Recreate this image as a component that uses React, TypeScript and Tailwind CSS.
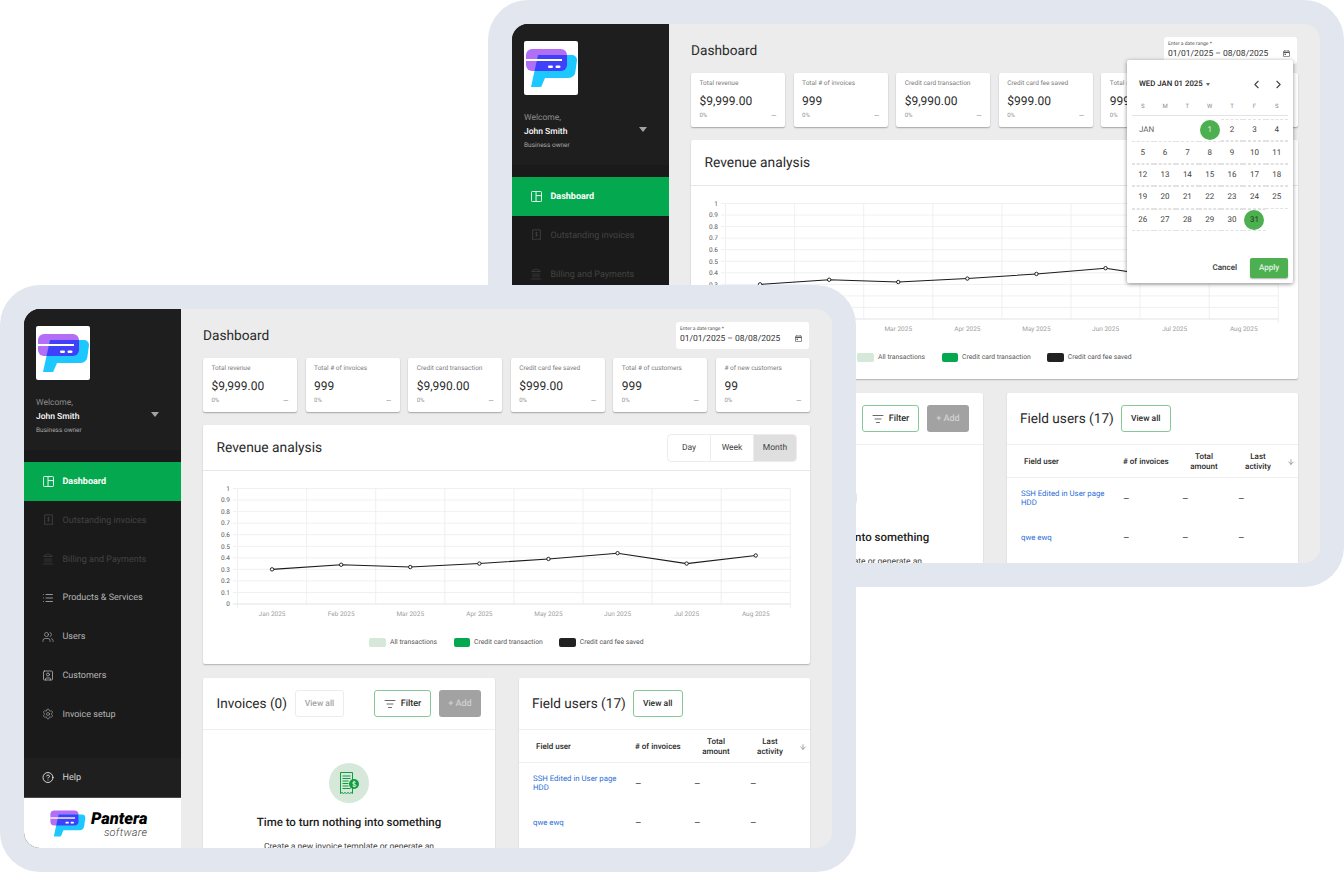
import { ArrowDown, ChevronLeft, ChevronRight, CircleHelp, Landmark, List, ListFilter, Settings, SquareUser, Users } from "lucide-react";

const STATS = [
  { label: "Total revenue", value: "$9,999.00" },
  { label: "Total # of invoices", value: "999" },
  { label: "Credit card transaction", value: "$9,990.00" },
  { label: "Credit card fee saved", value: "$999.00" },
  { label: "Total # of customers", value: "999" },
  { label: "# of new customers", value: "99" },
];

const MONTHS = ["Jan 2025", "Feb 2025", "Mar 2025", "Apr 2025", "May 2025", "Jun 2025", "Jul 2025", "Aug 2025"];
const VALUES = [0.3, 0.34, 0.32, 0.35, 0.39, 0.44, 0.35, 0.42];
const TICKS = [0, 0.1, 0.2, 0.3, 0.4, 0.5, 0.6, 0.7, 0.8, 0.9, 1];

const WEEKS = [
  [5, 6, 7, 8, 9, 10, 11],
  [12, 13, 14, 15, 16, 17, 18],
  [19, 20, 21, 22, 23, 24, 25],
  [26, 27, 28, 29, 30, 31],
];

function PLogo({ className }: { className?: string }) {
  return (
    <svg viewBox="0 0 54 54" className={className}>
      <path d="M8 8h29a6 6 0 0 1 6 6v10a6 6 0 0 1-6 6H8a6 6 0 0 1-6-6v-10a6 6 0 0 1 6-6z" fill="#b36ef7" />
      <path d="M14 14h34a5 5 0 0 1 5 5l-1.5 11a7 7 0 0 1-7 7H21L18 44a2 2 0 0 1-2 2H7L14 14z" fill="#1cc8ff" />
      <path d="M14 14h29v10a6 6 0 0 1-6 6H10.500L14 14z" fill="#4040fb" />
      <rect x="2" y="18" width="36" height="2" fill="#fff" />
      <rect x="24" y="24.500" width="5" height="2.600" rx="1.300" fill="#fff" />
      <rect x="31.500" y="24.500" width="5" height="2.600" rx="1.300" fill="#fff" />
    </svg>
  );
}

function DashboardIcon() {
  return (
    <svg viewBox="0 0 12 12" className="w-[11px] h-[11px]" fill="none" stroke="#fff" strokeWidth="1">
      <rect x="0.5" y="0.5" width="11" height="11" rx="1" />
      <path d="M5.5 0.5v11M5.5 5h6" />
    </svg>
  );
}

function ReceiptIcon() {
  return (
    <svg viewBox="0 0 12 14" className="w-[11px] h-[12px]" fill="none" stroke="currentColor" strokeWidth="1">
      <path d="M1.5 1h9v11.5l-1.5-1-1.5 1-1.5-1-1.5 1-1.5-1-1.5 1V1z" />
      <path d="M7.4 4.4C7 3.9 5 3.7 4.8 4.9c-.2 1.4 2.6.9 2.4 2.4-.2 1.1-2.1 1-2.7.4M6 3.2v5.6" strokeWidth="0.8" />
    </svg>
  );
}

function NavRow({ icon, label, tone }: { icon: React.ReactNode; label: string; tone: "active" | "muted" | "normal" }) {
  const rowClass =
    tone === "active"
      ? "bg-[#04a94f] text-white font-bold"
      : tone === "muted"
        ? "text-[#434343]"
        : "text-[#b4b4b4]";
  return (
    <div className={`h-[38.83px] flex items-center pl-[18px] text-[9px] ${rowClass}`}>
      <span className="w-[12px] flex justify-center mr-[8.5px]">{icon}</span>
      <span className="pt-[2.5px]">{label}</span>
    </div>
  );
}

function Sidebar() {
  return (
    <aside className="w-[157px] shrink-0 bg-[#1a1a1a] flex flex-col">
      <div className="h-[141px] bg-[#1e1e1e] pl-3 pt-[17px] relative">
        <div className="w-[54px] h-[54px] bg-white rounded-[2px] overflow-hidden">
          <PLogo className="w-[54px] h-[54px]" />
        </div>
        <div className="mt-[18px] text-[8.5px] leading-[10px] text-[#8c8c8c]">Welcome,</div>
        <div className="mt-[4px] text-[8.5px] leading-[10px] font-medium text-white">John Smith</div>
        <div className="mt-[4px] text-[6.5px] leading-[8px] text-[#a8a8a8]">Business owner</div>
        <span className="absolute left-[126.5px] top-[103px] border-x-[4.5px] border-t-[5px] border-x-transparent border-t-[#a3a3a3]" />
      </div>
      <nav className="pt-3 flex-1">
        <NavRow tone="active" label="Dashboard" icon={<DashboardIcon />} />
        <NavRow tone="muted" label="Outstanding invoices" icon={<ReceiptIcon />} />
        <NavRow tone="muted" label="Billing and Payments" icon={<Landmark size={12} strokeWidth={1.4} />} />
        <NavRow tone="normal" label="Products & Services" icon={<List size={14} strokeWidth={1.6} />} />
        <NavRow tone="normal" label="Users" icon={<Users size={14} strokeWidth={1.3} />} />
        <NavRow tone="normal" label="Customers" icon={<SquareUser size={13} strokeWidth={1.6} />} />
        <NavRow tone="normal" label="Invoice setup" icon={<Settings size={14} strokeWidth={1.2} />} />
      </nav>
      <div className="h-[40px] bg-[#1f1f1f] border-b border-[#4a4a4a] flex items-center pl-[18px] text-[9px] text-[#d4d4d4]">
        <span className="w-[12px] flex justify-center mr-[8.5px] text-white">
          <CircleHelp size={13} strokeWidth={1.6} />
        </span>
        <span className="pt-[2px]">Help</span>
      </div>
      <div className="h-[50px] bg-white flex items-center pl-[25px]">
        <PLogo className="w-[37px] h-[37px]" />
        <div className="ml-[5px] mt-[4px] text-right">
          <div className="font-black italic text-[16.5px] leading-[15px] text-black">Pantera</div>
          <div className="italic font-light text-[11px] leading-[11px] tracking-[0.3px] text-[#444]">software</div>
        </div>
      </div>
    </aside>
  );
}

function StatCard({ label, value }: { label: string; value: string }) {
  return (
    <div className="h-[54px] bg-white rounded-[2px] shadow-[0_1px_1.5px_rgba(0,0,0,0.3)] px-[8.5px] pt-[6px]">
      <div className="text-[6.5px] leading-[8px] text-[#7d7d7d] whitespace-nowrap">{label}</div>
      <div className="mt-[7px] text-[12px] leading-[14px] text-[#2a2a2a]">{value}</div>
      <div className="mt-[4px] flex justify-between text-[6px] leading-[8px] text-[#8f8f8f]">
        <span>0%</span>
        <span className="text-[7px]">—</span>
      </div>
    </div>
  );
}

function Chart() {
  const top = 17.5;
  const bottom = 133;
  const left = 34.5;
  const step = 69.1;
  const yOf = (v: number) => bottom - v * (bottom - top);
  const xOf = (i: number) => left + step / 2 + i * step;
  const points = VALUES.map((v, i) => `${xOf(i)},${yOf(v)}`).join(" ");
  return (
    <svg width="607" height="160" viewBox="0 0 607 160" className="block">
      {TICKS.map((t) => (
        <g key={t}>
          <line x1={30} x2={587.5} y1={yOf(t)} y2={yOf(t)} stroke={t === 0 ? "#dcdcdc" : "#ececec"} strokeWidth="0.8" />
          <text x={27} y={yOf(t) + 2.3} textAnchor="end" fontSize="6.5" fill="#555">{t}</text>
        </g>
      ))}
      {MONTHS.concat("").map((_, i) => (
        <line key={i} x1={left + i * step} x2={left + i * step} y1={top} y2={bottom + (i === 0 || i === 8 ? 4 : 0)} stroke="#ececec" strokeWidth="0.8" />
      ))}
      {MONTHS.map((m, i) => (
        <text key={m} x={xOf(i)} y={145} textAnchor="middle" fontSize="6.5" fill="#a0a0a0">{m}</text>
      ))}
      <polyline points={points} fill="none" stroke="#1b1b1b" strokeWidth="1.1" />
      {VALUES.map((v, i) => (
        <circle key={i} cx={xOf(i)} cy={yOf(v)} r="1.7" fill="#fff" stroke="#111" strokeWidth="0.9" />
      ))}
    </svg>
  );
}

function LegendItem({ swatch, label }: { swatch: string; label: string }) {
  return (
    <div className="flex items-center gap-[4px] text-[6.8px] text-[#555]">
      <span className={`w-[16.5px] h-[9px] rounded-[2px] ${swatch}`} />
      {label}
    </div>
  );
}

function RevenueCard() {
  return (
    <section className="mt-[13px] h-[239px] bg-white shadow-[0_1px_1.5px_rgba(0,0,0,0.25)] rounded-[2px]">
      <div className="h-[46px] border-b border-[#e6e6e6] flex items-center justify-between pl-[13.5px] pr-[13px]">
        <h2 className="pt-[1px] text-[13.8px] text-[#2a2a2a] font-normal">Revenue analysis</h2>
        <div className="flex h-[28px] border border-[#ececec] rounded-[4px] overflow-hidden text-[8.5px] text-[#444]">
          <span className="w-[43px] pt-[1px] flex items-center justify-center border-r border-[#ececec]">Day</span>
          <span className="w-[43px] pt-[1px] flex items-center justify-center border-r border-[#ececec]">Week</span>
          <span className="w-[42px] pt-[1px] flex items-center justify-center bg-[#dfdfdf]">Month</span>
        </div>
      </div>
      <Chart />
      <div className="mt-[6px] flex justify-center gap-[16.5px]">
        <LegendItem swatch="bg-[#d5e8da]" label="All transactions" />
        <LegendItem swatch="bg-[#04a94f]" label="Credit card transaction" />
        <LegendItem swatch="bg-[#222222]" label="Credit card fee saved" />
      </div>
    </section>
  );
}

function EmptyIcon() {
  return (
    <div className="w-[40px] h-[40px] rounded-full bg-[#d5e8da] flex items-center justify-center">
      <svg viewBox="0 0 26 26" className="w-[26px] h-[26px]" fill="none" stroke="#0f9d3f">
        <path d="M4.5 2.5h12v21l-1.5-1-1.5 1-1.5-1-1.5 1-1.5-1-1.5 1-1.5-1-1.5 1v-21z" strokeWidth="1" />
        <path d="M6.5 6h8M6.5 8.5h8M6.5 11h6M6.5 13.5h6M6.5 16h6M6.5 18.5h8" strokeWidth="1" />
        <circle cx="18" cy="14" r="5" fill="#0f9d3f" stroke="none" />
        <path d="M19.7 12.4c-.5-.7-3-.8-3 .7 0 1.6 3.4.9 3.4 2.4 0 1.4-2.7 1.2-3.5.4M18 10.8v6.4" stroke="#fff" strokeWidth="0.8" />
      </svg>
    </div>
  );
}

function InvoicesCard() {
  return (
    <section className="w-[292px] h-[200px] bg-white shadow-[0_1px_1.5px_rgba(0,0,0,0.2)] rounded-[2px]">
      <div className="h-[52px] border-b border-[#efefef] flex items-center pl-[13.5px] pr-[14px]">
        <h2 className="pt-[1px] text-[13.6px] text-[#2a2a2a] font-normal">Invoices (0)</h2>
        <span className="ml-[8px] w-[49px] h-[27px] border border-[#ececec] rounded-[3px] flex items-center justify-center pt-[1px] text-[8.5px] font-medium text-[#a3a3a3]">
          View all
        </span>
        <span className="ml-auto w-[57px] h-[27px] border border-[#86c998] rounded-[3px] flex items-center justify-center gap-[5px] text-[9px] font-medium text-[#2a2a2a]">
          <ListFilter size={12} strokeWidth={1.4} />
          <span className="pt-[2px]">Filter</span>
        </span>
        <span className="ml-[8px] w-[42px] h-[27px] bg-[#a2a2a2] rounded-[3px] flex items-center justify-center pt-[2px] text-[9px] font-medium text-[#d0d0d0]">
          + Add
        </span>
      </div>
      <div className="pt-[33px] flex flex-col items-center">
        <EmptyIcon />
        <div className="mt-[12px] text-[11.5px] leading-[14px] font-medium text-[#222]">Time to turn nothing into something</div>
        <div className="mt-[13px] text-[8.5px] leading-[11px] text-[#444] whitespace-nowrap">Create a new invoice template or generate an</div>
      </div>
    </section>
  );
}

function FieldRow({ name, height }: { name: string; height: string }) {
  return (
    <div className={`grid grid-cols-[116px_59px_56px_46px_1fr] items-center text-[10px] text-[#444] ${height}`}>
      <a className="pl-[14px] pr-[14px] text-[7.8px] leading-[9.5px] text-[#2b6fd6]">{name}</a>
      <span className="pt-[2px]">–</span>
      <span className="pt-[2px]">–</span>
      <span className="pt-[2px]">–</span>
    </div>
  );
}

function FieldUsersCard() {
  return (
    <section className="w-[291px] h-[200px] bg-white shadow-[0_1px_1.5px_rgba(0,0,0,0.2)] rounded-[2px]">
      <div className="h-[52px] border-b border-[#efefef] flex items-center pl-[13px]">
        <h2 className="pt-[1px] text-[13.6px] text-[#2a2a2a] font-normal">Field users (17)</h2>
        <span className="ml-[7px] w-[50px] h-[27px] border border-[#86c998] rounded-[3px] flex items-center justify-center pt-[1px] text-[8.5px] font-medium text-[#2a2a2a]">
          View all
        </span>
      </div>
      <div className="h-[33px] pt-[1px] border-b border-[#efefef] grid grid-cols-[116px_59px_56px_46px_1fr] items-center text-[8px] leading-[10px] font-medium text-[#2a2a2a]">
        <span className="pl-[17px]">Field user</span>
        <span className="whitespace-nowrap">{"# of invoices"}</span>
        <span className="w-[44px] text-center">Total amount</span>
        <span className="w-[40px] text-center">Last activity</span>
        <ArrowDown size={8} className="ml-[3px] text-[#777]" />
      </div>
      <FieldRow name="SSH Edited in User page HDD" height="h-[40px]" />
      <FieldRow name="qwe ewq" height="h-[39px]" />
    </section>
  );
}

function CalendarPopover() {
  return (
    <div className="absolute left-[615px] top-[36px] w-[165.5px] h-[223px] bg-white rounded-[2px] shadow-[0_1px_4px_rgba(0,0,0,0.45)] flex flex-col px-[4.5px]">
      <div className="mt-[18px] pl-[7.5px] h-[12px] flex items-center text-[7.8px] font-medium text-[#222]">
        <span className="whitespace-nowrap">WED JAN 01 2025</span>
        <span className="ml-[3px] border-x-[2.5px] border-t-[3px] border-x-transparent border-t-[#666]" />
        <ChevronLeft size={13} className="ml-auto text-[#444]" />
        <ChevronRight size={13} className="ml-[9px] mr-[3px] text-[#444]" />
      </div>
      <div className="mt-[11px] h-[15px] pt-[1px] pb-[5px] grid grid-cols-7 border-b border-[#e3e3e3] text-[6px] leading-[9px] text-center text-[#8a8a8a]">
        {["S", "M", "T", "W", "T", "F", "S"].map((d, i) => (
          <span key={i}>{d}</span>
        ))}
      </div>
      <div className="mt-[3px] grid grid-cols-7 h-[22.4px] items-center text-[8px] text-center text-[#444]">
        <span className="col-span-3 pl-[7.5px] text-left text-[#666]">JAN</span>
        <span className="flex justify-center">
          <span className="w-[20px] h-[20px] rounded-full bg-[#4caf50] text-white/80 flex items-center justify-center">1</span>
        </span>
        {[2, 3, 4].map((d) => (
          <span key={d} className="h-full flex items-center justify-center border-y border-dashed border-[#e2e2e2]">{d}</span>
        ))}
      </div>
      {WEEKS.map((week) => (
        <div key={week[0]} className="grid grid-cols-7 h-[22.4px] items-center text-[8px] text-center text-[#444]">
          {week.map((d) => (
            <span key={d} className="h-full flex items-center justify-center border-y border-dashed border-[#e2e2e2]">
              {d === 31 ? (
                <span className="w-[20px] h-[20px] rounded-full bg-[#4caf50] text-[#1c3a1e] flex items-center justify-center">31</span>
              ) : (
                d
              )}
            </span>
          ))}
        </div>
      ))}
      <div className="mt-auto mb-[5px] flex items-center justify-end text-[8px] font-medium">
        <span className="mr-[13px] text-[#333]">Cancel</span>
        <span className="w-[38px] h-[20px] bg-[#4caf50] rounded-[2px] shadow-[0_1px_1.5px_rgba(0,0,0,0.3)] text-white/85 flex items-center justify-center">Apply</span>
      </div>
    </div>
  );
}

function Dashboard({ showCalendar }: { showCalendar?: boolean }) {
  return (
    <div className="relative w-[808px] h-[539px] rounded-[16px] overflow-hidden flex bg-[#ececec]">
      <Sidebar />
      <main className="flex-1 min-w-0 pl-[22px] pr-[22px] pt-[13px]">
        <div className="h-[27px] flex items-center justify-between">
          <h1 className="pt-[1px] text-[13.7px] text-[#2a2a2a] font-normal">Dashboard</h1>
          <div className="mr-[1px] w-[133px] h-[27px] bg-white rounded-[3px] pl-[4px] pr-[6px] pt-[4px] relative">
            <div className="text-[5px] leading-[6px] text-[#555]">Enter a date range *</div>
            <div className="pt-[1px] text-[8.5px] leading-[12px] text-[#333] whitespace-nowrap">01/01/2025 – 08/08/2025</div>
            <svg viewBox="0 0 10 10" className="absolute right-[7px] top-[13px] w-[7px] h-[7px]" fill="none" stroke="#555" strokeWidth="1">
              <rect x="0.7" y="1.5" width="8.6" height="8" rx="0.8" />
              <path d="M0.7 3.6h8.6" strokeWidth="1.6" />
              <path d="M2.6 0v2M7.4 0v2" />
              <rect x="2.2" y="5.2" width="2" height="2" fill="#555" stroke="none" />
            </svg>
          </div>
        </div>
        <div className="mt-[9px] grid grid-cols-6 gap-[8.5px]">
          {STATS.map((s) => (
            <StatCard key={s.label} {...s} />
          ))}
        </div>
        <RevenueCard />
        <div className="mt-[14px] flex justify-between">
          <InvoicesCard />
          <FieldUsersCard />
        </div>
      </main>
      {showCalendar && <CalendarPopover />}
    </div>
  );
}

function DeviceFrame({ className, showCalendar }: { className: string; showCalendar?: boolean }) {
  return (
    <div className={`absolute p-6 bg-[#e1e6ef] rounded-[40px] ${className}`}>
      <Dashboard showCalendar={showCalendar} />
    </div>
  );
}

export default function App() {
  return (
    <div className="relative w-[1344px] h-[872px] overflow-hidden bg-white font-['Roboto',sans-serif] [text-rendering:geometricPrecision]">
      <DeviceFrame className="left-[488px] top-0" showCalendar />
      <DeviceFrame className="left-0 top-[285px]" />
    </div>
  );
}
